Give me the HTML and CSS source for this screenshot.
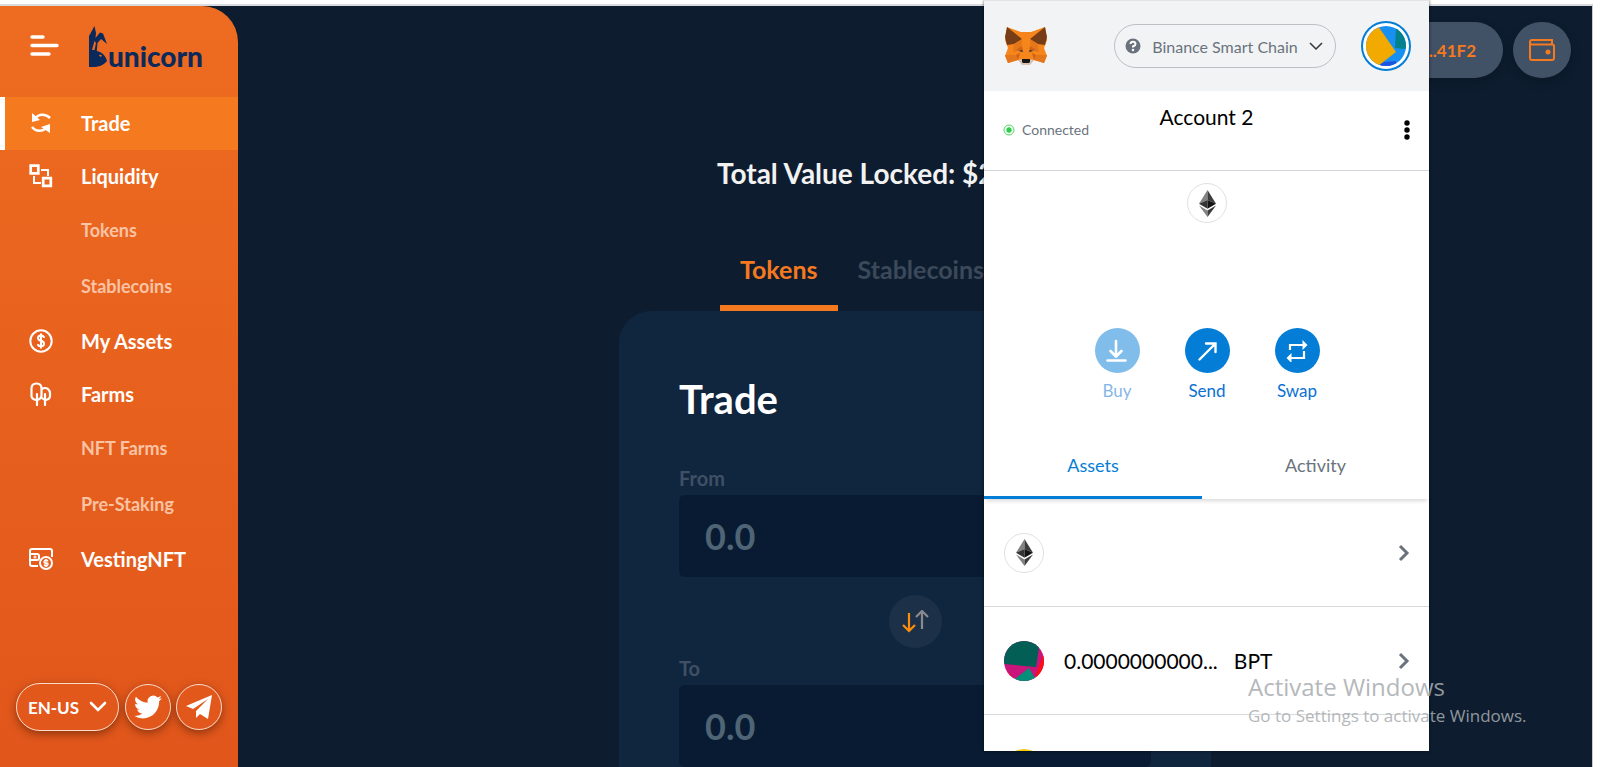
FILE: index.html
```html
<!DOCTYPE html>
<html lang="en">
<head>
<meta charset="utf-8">
<title>Bunicorn</title>
<link rel="stylesheet" href="styles.css">
</head>
<body>
<svg class="defs" aria-hidden="true">
  <symbol id="eth" viewBox="0 0 17 27">
    <path fill="#828384" d="M8.500 0v10L0 13.800z"/><path fill="#3c3c3b" d="M8.500 0v10l8.500 3.800z"/>
    <path fill="#343434" d="M8.500 10v8.800L0 13.800z"/><path fill="#141414" d="M8.500 10v8.800l8.500-5z"/>
    <path fill="#828384" d="M0 15.600l8.500 5V27z"/><path fill="#3c3c3b" d="M17 15.600l-8.500 5V27z"/>
  </symbol>
  <symbol id="next" viewBox="0 0 12 18"><path d="M2 2l7 7-7 7" fill="none" stroke="#6a737d" stroke-width="3"/></symbol>
</svg>
<div class="app">
  <aside class="sidebar">
    <div class="brand">
      <button class="menu" aria-label="Menu"><svg width="30" height="22" viewBox="0 0 30 22" fill="none" stroke="#fff" stroke-width="3.400" stroke-linecap="round"><path d="M3 2h11M3 10.500h25M3 19h17"/></svg></button>
      <a class="logo" href="#"><svg width="19" height="42" viewBox="0 0 19 42"><path fill="#0b2a5b" d="M0 41V10L5.500 0 7 7 6.500 12 11 6.500 14 7.500 18 18 12 13 8.500 17 7.800 25C13 26 17 30 18 35 14 40 9 41.500 0 41z"/><path fill="#ec6a20" d="M5.500 15L7 17 5.500 24 3 24zM10 29q2-1 3 1-2 2-3-1z"/></svg><span>unicorn</span></a>
    </div>
    <nav class="nav">
      <a class="item active" href="#"><svg width="24" height="24" viewBox="0 0 24 24" fill="none" stroke="#fff" stroke-width="2.500"><path d="M6 8C9 3 16 2 21 7M3 16c4 5 11 5 15 0"/><path fill="#fff" stroke="none" d="M3 2v9l8-2zM21 13v9l-9-6z"/></svg>Trade</a>
      <a class="item" href="#"><svg width="24" height="24" viewBox="0 0 24 24" fill="none" stroke="#fff" stroke-width="2"><path stroke-width="2.700" d="M1.700 1.700h7.600v7.600H1.700zM14.200 14.200h7.600v7.600h-7.600z"/><path d="M12 6h7v6M5 12v7h7"/></svg>Liquidity</a>
      <a class="sub" href="#">Tokens</a>
      <a class="sub" href="#">Stablecoins</a>
      <a class="item" href="#"><svg width="24" height="24" viewBox="0 0 24 24" fill="none" stroke="#fff" stroke-width="2"><circle cx="12" cy="12" r="10.700"/><path d="M15 9q0-2.500-3-2.500T9 9q0 2 3 2.800t3 3q0 2.500-3 2.500T9 15M12 4.500v15"/></svg>My Assets</a>
      <a class="item" href="#"><svg width="24" height="24" viewBox="0 0 24 24" fill="none" stroke="#fff" stroke-width="2.200" stroke-linecap="round"><path d="M8 23V12M7 18q-4.500-1-4.500-4V6.500q0-5 5-5t5 5v7q0 3-4 4.500M13 7q3-2 6 0 2 2 2 4v3q0 3-4 4-3-.5-4-2M16 23V12"/></svg>Farms</a>
      <a class="sub" href="#">NFT Farms</a>
      <a class="sub" href="#">Pre-Staking</a>
      <a class="item" href="#"><svg width="24" height="24" viewBox="0 0 24 24" fill="none" stroke="#fff" stroke-width="2"><path d="M23 10V4q0-2-2-2H3Q1 2 1 4v13q0 2 2 2h6M1 7h7q2 0 2 2v2q0 2-2 2H1"/><circle cx="6" cy="10" r=".5"/><circle cx="17" cy="16" r="6"/><path stroke-width="1.300" d="M19 14.500q-.5-1.500-2-1.500t-2 1.500 2 1.500 2 1.500-2 1.500-2-1.500M17 12v8"/></svg>VestingNFT</a>
    </nav>
    <div class="foot">
      <button class="lang">EN-US<svg width="18" height="12" viewBox="0 0 18 12" fill="none" stroke="#fff" stroke-width="2.600" stroke-linecap="round"><path d="M2 2l7 7 7-7"/></svg></button>
      <a class="social" href="#" aria-label="Twitter"><svg width="28" height="28" viewBox="0 0 24 24" fill="#fff"><path d="M23.950 4.570a10 10 0 0 1-2.820.77 4.960 4.960 0 0 0 2.160-2.720c-.95.550-2 .95-3.130 1.180a4.920 4.920 0 0 0-8.380 4.480A13.930 13.930 0 0 1 1.640 3.160a4.920 4.920 0 0 0 1.520 6.570 4.900 4.900 0 0 1-2.230-.61v.06a4.920 4.920 0 0 0 3.950 4.830 5 5 0 0 1-2.210.08 4.940 4.940 0 0 0 4.600 3.420A9.870 9.870 0 0 1 0 19.540a13.990 13.990 0 0 0 7.550 2.210c9.050 0 14-7.500 14-13.980 0-.21 0-.42-.02-.63a9.940 9.940 0 0 0 2.460-2.550z"/></svg></a>
      <a class="social" href="#" aria-label="Telegram"><svg width="26" height="24" viewBox="0 0 26 24" fill="#fff"><path d="M26 0L0 11l7 3L22 4 10 16v7l4-4 8 5z"/></svg></a>
    </div>
  </aside>
  <main class="main">
    <header class="top">
      <button class="wallet">...41F2</button>
      <button class="round" aria-label="Wallet"><svg width="26" height="22" viewBox="0 0 26 22" fill="none" stroke="#f5791f" stroke-width="2"><path d="M23 5V1H3Q1 1 1 3v16q0 2 2 2h20q2 0 2-2V7q0-1.500-2-1.500H3Q1 5.500 1 3"/><circle cx="19" cy="13" r="1.500" fill="#f5791f"/></svg></button>
    </header>
    <h2 class="tvl">Total Value Locked: $2</h2>
    <div class="tabs">
      <button class="tab on">Tokens</button>
      <button class="tab">Stablecoins</button>
    </div>
    <section class="card">
      <h1>Trade</h1>
      <label for="from">From</label>
      <input id="from" type="text" placeholder="0.0">
      <button class="flip" aria-label="Switch tokens"><svg width="28" height="24" viewBox="0 0 28 24" fill="none" stroke-width="2.200"><path stroke="#ff8c0a" d="M8 3v18M2 15l6 6 6-6"/><path stroke="#8a8a8c" d="M21 19V2M15 7l6-6 6 6"/></svg></button>
      <label for="to">To</label>
      <input id="to" type="text" placeholder="0.0">
    </section>
  </main>
</div>

<div class="popup">
  <header class="p-head">
    <svg width="42" height="38" viewBox="0 0 42 38">
      <path fill="#f6851b" d="M2 0l14 5h10L40 0l2 13-3 8 3 8-3 7-10-3-4 4h-8l-4-4-10 3-3-7 3-8-3-8z"/>
      <path fill="#763d16" d="M2 0l15 12-8 5-7 1-2-8zM40 0L25 12l8 5 7 1 2-8z"/>
      <path fill="#e4761b" d="M9 18l8-6-1 11-8 2zM33 18l-8-6 1 11 8 2zM0 28h11l2 5-10 3zM42 28H31l-2 5 10 3z"/>
      <path fill="#cd6116" d="M11 23l6-4 1 6zM31 23l-6-4-1 6zM11 28l4-2-2 7zM31 28l-4-2 2 7z"/>
      <path fill="#d7c1b3" d="M13 33l5-1h6l5 1-4 5h-8z"/><path fill="#161616" d="M17 32h8v3l-1 1h-6l-1-1z"/>
      <path fill="#233447" d="M14 24l3-1 1 2zM28 24l-3-1-1 2z"/>
    </svg>
    <button class="net"><svg width="16" height="16" viewBox="0 0 16 16"><circle cx="8" cy="8" r="7.500" fill="#6a737d"/><path d="M5.500 6q.2-2.300 2.500-2.300T10.500 6Q10.500 7.500 8 8.500v1" fill="none" stroke="#fff" stroke-width="2"/><circle cx="8" cy="12" r="1.200" fill="#fff"/></svg><span>Binance Smart Chain</span><svg width="14" height="9" viewBox="0 0 14 9" fill="none" stroke="#333" stroke-width="1.500"><path d="M1 1l6 6 6-6"/></svg></button>
    <button class="avatar" aria-label="My accounts"><svg width="40" height="40" viewBox="0 0 40 40"><clipPath id="c1"><circle cx="20" cy="20" r="20"/></clipPath><g clip-path="url(#c1)"><path fill="#1890f2" d="M0 0h40v40H0z"/><path fill="#03828e" d="M30 0l-1 22 11 1V0z"/><path fill="#1c56e0" d="M18 36l12-1v5H10z"/><path fill="#f2a900" d="M12 0l18 26-18 14H0V0z"/></g></svg></button>
  </header>
  <div class="p-acct">
    <span class="conn"><svg width="12" height="12" viewBox="0 0 12 12"><circle cx="6" cy="6" r="5" fill="none" stroke="#4cd964"/><circle cx="6" cy="6" r="2.700" fill="#32cc4b"/></svg>Connected</span>
    <span class="name">Account 2</span>
    <button class="more" aria-label="Options"><svg width="6" height="20" viewBox="0 0 6 20"><circle cx="3" cy="3" r="2.700"/><circle cx="3" cy="10" r="2.700"/><circle cx="3" cy="17" r="2.700"/></svg></button>
  </div>
  <div class="p-bal">
    <span class="token"><svg width="17" height="27"><use href="#eth"/></svg></span>
    <div class="acts">
      <button class="act" disabled><i><svg width="22" height="24" viewBox="0 0 22 24" fill="none" stroke="#fff" stroke-width="2.600" stroke-linecap="round" stroke-linejoin="round"><path d="M10 2v15M4.500 12l5.500 5.500 5.500-5.500M1.500 21.500h18"/></svg></i>Buy</button>
      <button class="act"><i><svg width="20" height="20" viewBox="0 0 20 20" fill="none" stroke="#fff" stroke-width="2.400" stroke-linecap="round"><path d="M2.500 18.500L18 3M9 2.500h9.500v8.500"/></svg></i>Send</button>
      <button class="act"><i><svg width="22" height="22" viewBox="0 0 22 22" fill="none" stroke="#fff" stroke-width="2.200"><path d="M4 10V5h13M18 11v7H5"/><path fill="#fff" stroke="none" d="M16.500 0l5 5-5 5zM5.500 13v10l-5-5z"/></svg></i>Swap</button>
    </div>
  </div>
  <div class="p-tabs"><button class="p-tab on">Assets</button><button class="p-tab">Activity</button></div>
  <div class="rows">
    <a class="row" href="#"><span class="token"><svg width="17" height="27"><use href="#eth"/></svg></span><svg class="go" width="12" height="18"><use href="#next"/></svg></a>
    <a class="row" href="#"><svg width="40" height="40" viewBox="0 0 40 40"><clipPath id="c2"><circle cx="20" cy="20" r="20"/></clipPath><g clip-path="url(#c2)"><path fill="#c8147b" d="M0 0h40v40H0z"/><path fill="#fb0e14" d="M40 12l-9 24 9 4zM0 27l12 13H0z"/><path fill="#038f78" d="M8 40l17-13 8 13z"/><path fill="#035e56" d="M0 23l32 3 4-26H0z"/></g></svg><span class="amt">0.0000000000...</span><span class="sym">BPT</span><svg class="go" width="12" height="18"><use href="#next"/></svg></a>
    <a class="row" href="#" aria-label="Token"><svg width="40" height="40" viewBox="0 0 40 40"><circle cx="20" cy="20" r="20" fill="#f6c90e"/></svg></a>
  </div>
</div>

<div class="notice"><p class="n1">Activate Windows</p><p class="n2">Go to Settings to activate Windows.</p></div>
</body>
</html>
```
FILE: styles.css
```css
* { box-sizing: border-box; }
body { margin: 0; padding-top: 4px; height: 100vh; overflow: hidden; background: #fff; font-family: Lato, sans-serif; font-weight: 700; }
button { font: inherit; color: inherit; background: none; border: 0; padding: 0; cursor: pointer; }
a { color: inherit; text-decoration: none; }
h1, h2, p { margin: 0; }
svg { display: block; flex: none; }
.defs { position: absolute; width: 0; height: 0; }

.app { display: flex; height: 100vh; margin-right: 7px; border-top: 2px solid #d9dbde; border-right: 1px solid #c9cbce; background: #0d1d2f; }

.sidebar { display: flex; flex-direction: column; width: 238px; flex: none; height: calc(100vh - 6px); border-top-right-radius: 36px; background: linear-gradient(#ee6c21, #e1561b); color: #fff; }
.brand { display: flex; align-items: flex-start; gap: 30px; height: 91px; padding: 20px 0 0 29px; }
.menu { margin-top: 9px; }
.logo { display: flex; align-items: flex-end; color: #0b2a5b; font-size: 28px; font-weight: 900; line-height: 34px; height: 42px; }
.logo span { margin-bottom: -5px; }
.nav { flex: 1; font-size: 20px; }
.item { display: flex; align-items: center; gap: 28px; height: 53px; padding: 0 0 2px 29px; }
.active { background: #f5791f; border-left: 5px solid #fff; padding-left: 24px; }
.sub { display: flex; align-items: center; height: 56px; padding: 0 0 2px 81px; font-size: 18px; color: #f9c3a4; }
.foot { display: flex; align-items: center; justify-content: space-between; padding: 0 16px 36px; }
.lang, .social { display: flex; align-items: center; justify-content: center; border: 1px solid #fbdccb; box-shadow: 0 3px 8px rgba(60, 20, 0, .5); }
.lang { width: 103px; height: 48px; border-radius: 24px; gap: 10px; font-size: 17px; }
.social { width: 46px; height: 46px; border-radius: 50%; }

.main { flex: 1; overflow: hidden; display: flex; flex-direction: column; align-items: center; height: calc(100vh - 6px); }
.top { align-self: stretch; display: flex; justify-content: flex-end; gap: 10px; padding: 16px 21px 0 0; }
.wallet, .round { height: 56px; background: #415166; color: #f5791f; box-shadow: 0 4px 10px rgba(0, 0, 0, .2); }
.wallet { width: 150px; border-radius: 28px; padding-right: 27px; text-align: right; font-size: 17px; }
.round { width: 58px; border-radius: 28px; display: grid; place-items: center; }
.tvl { width: 396px; margin-top: 78px; color: #f2f2f2; font-size: 28px; line-height: 34px; }
.tabs { display: flex; width: 390px; margin-top: 57px; font-size: 25px; }
.tab { height: 64px; padding: 0 20px 15px; color: #3b495a; border-bottom: 6px solid transparent; }
.tab.on { color: #f5791f; border-color: #f5791f; }
.card { display: flex; flex-direction: column; width: 592px; flex: 1 0 500px; padding: 60px 60px 0; background: #10253e; border-radius: 32px; }
.card h1 { font-size: 40px; line-height: 56px; color: #fff; margin-bottom: 39px; }
.card label { font-size: 20px; line-height: 24px; color: #3f5065; margin-bottom: 5px; }
.card input { height: 82px; border: 0; border-radius: 6px; background: #081b32; padding: 0 26px; font: 700 36px Lato, sans-serif; color: #fff; }
.card input::placeholder { color: #4f6475; opacity: 1; }
.flip { align-self: center; display: grid; place-items: center; width: 53px; height: 53px; border-radius: 50%; background: #1c3148; margin: 18px 0 8px; }

.popup { position: absolute; top: 0; bottom: 16px; right: 171px; width: 445px; overflow: hidden; background: #fff; color: #000; font-weight: 400; border-top: 1px solid #e2e4e6; box-shadow: 0 0 3px rgba(0, 0, 0, .6); display: flex; flex-direction: column; }
.p-head { display: flex; align-items: center; height: 90px; flex: none; padding: 0 18px 0 21px; background: #f2f3f4; }
.net { display: flex; align-items: center; justify-content: space-between; width: 222px; height: 44px; margin: 0 25px 0 auto; padding: 0 12px 0 10px; border: 1px solid #bbc0c5; border-radius: 22px; color: #6a737d; font-size: 16px; }
.avatar { display: grid; place-items: center; width: 50px; height: 50px; border: 2px solid #037dd6; border-radius: 50%; background: #fff; }
.p-acct { display: grid; grid-template-columns: 1fr auto 1fr; align-items: center; height: 80px; flex: none; padding: 0 19px 2px; border-bottom: 1px solid #d2d5d9; }
.conn { display: flex; align-items: center; gap: 7px; font-size: 14px; color: #6a737d; }
.name { font-size: 21px; line-height: 26px; padding-bottom: 26px; }
.more { justify-self: end; }
.p-bal { display: flex; flex-direction: column; align-items: center; height: 272px; flex: none; padding: 12px 0 0 1px; }
.token { display: grid; place-items: center; width: 40px; height: 40px; border: 1px solid #dfe1e3; border-radius: 50%; }
.acts { display: flex; gap: 30px; margin-top: 105px; }
.act { display: flex; flex-direction: column; align-items: center; gap: 8px; width: 60px; font-size: 17px; line-height: 20px; color: #0a70d2; }
.act i { display: grid; place-items: center; width: 45px; height: 45px; border-radius: 50%; background: #037dd6; }
.act:disabled { opacity: .5; }
.p-tabs { display: flex; height: 56px; flex: none; font-size: 18px; box-shadow: 0 4px 4px -2px rgba(0, 0, 0, .15); }
.p-tab { flex: 1; padding-bottom: 10px; color: #6a737d; border-bottom: 3px solid transparent; }
.p-tab.on { flex: 0 0 49%; color: #037dd6; border-color: #037dd6; }
.row { display: flex; align-items: center; height: 108px; padding: 0 19px 0 20px; border-bottom: 1px solid #d8dbdd; font-size: 21px; }
.amt { margin-left: 20px; }
.sym { margin-left: 16px; }
.go { margin-left: auto; }

.notice { position: absolute; right: 66px; bottom: 39px; width: 286px; font-family: "Open Sans", sans-serif; font-weight: 400; color: #a9acb0; opacity: .85; white-space: nowrap; }
.n1 { font-size: 24px; line-height: 34px; }
.n2 { font-size: 17px; line-height: 24px; }
```
